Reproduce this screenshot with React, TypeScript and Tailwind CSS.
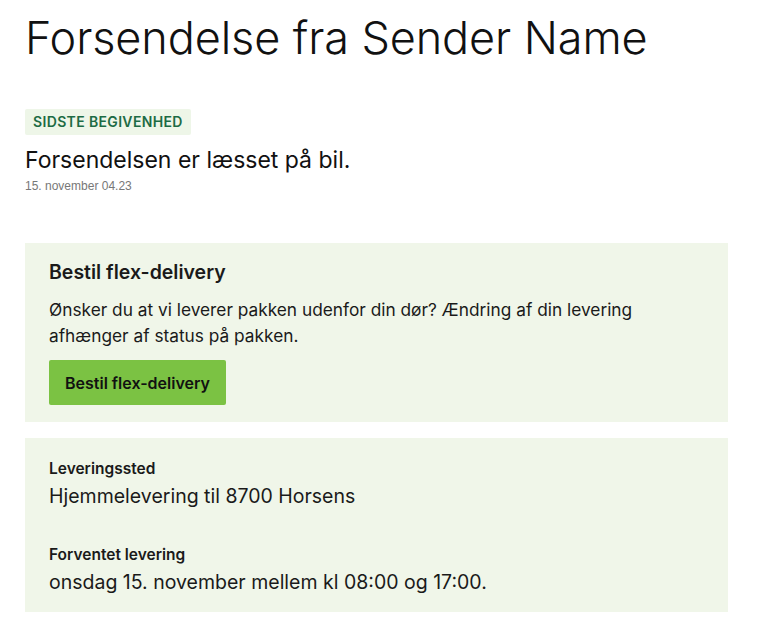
import React from "react";

const sans = "font-['Inter','Noto_Sans',sans-serif]";

function InfoRow({ label, value }: { label: string; value: string }) {
  return (
    <div>
      <p className="text-[15.5px] font-semibold leading-5 text-[#1a1a1a]">{label}</p>
      <p className="mt-[5px] text-[19.5px] leading-6 text-[#1a1a1a]">{value}</p>
    </div>
  );
}

export default function App() {
  return (
    <div className={`${sans} min-h-screen bg-white px-[25px] text-[#111]`}>
      <h1 className="pt-[12px] text-[45px] font-light leading-[52px] tracking-[-0.1px]">
        Forsendelse fra Sender Name
      </h1>

      <div className="mt-[45px]">
        <span className="inline-block rounded-[2px] bg-[#eef6e8] px-2 py-[4px] text-[14px] font-semibold leading-[18px] tracking-[0.35px] text-[#1d6b44]">
          SIDSTE BEGIVENHED
        </span>
        <p className="mt-[11px] text-[23px] leading-7">Forsendelsen er læsset på bil.</p>
        <p className="mt-[4px] font-['Liberation_Sans',Arial,sans-serif] text-[12px] leading-4 text-[#777]">
          15. november 04.23
        </p>
      </div>

      <div className="mt-[49px] w-[703px] bg-[#f0f6e9] px-6 pt-[15px] pb-[17px]">
        <h2 className="text-[19.5px] font-semibold leading-7 text-[#1a1a1a]">Bestil flex-delivery</h2>
        <p className="mt-[11px] text-[17.3px] leading-[26px] text-[#1a1a1a]">
          Ønsker du at vi leverer pakken udenfor din dør? Ændring af din levering afhænger af status på pakken.
        </p>
        <button className="mt-[11px] h-[45px] rounded-[2px] bg-[#7bc243] px-4 text-[16px] font-semibold text-[#111]">
          Bestil flex-delivery
        </button>
      </div>

      <div className="mt-4 flex w-[703px] flex-col gap-[37px] bg-[#f0f6e9] px-6 pt-[21px] pb-[18px]">
        <InfoRow label="Leveringssted" value="Hjemmelevering til 8700 Horsens" />
        <InfoRow label="Forventet levering" value="onsdag 15. november mellem kl 08:00 og 17:00." />
      </div>
    </div>
  );
}
